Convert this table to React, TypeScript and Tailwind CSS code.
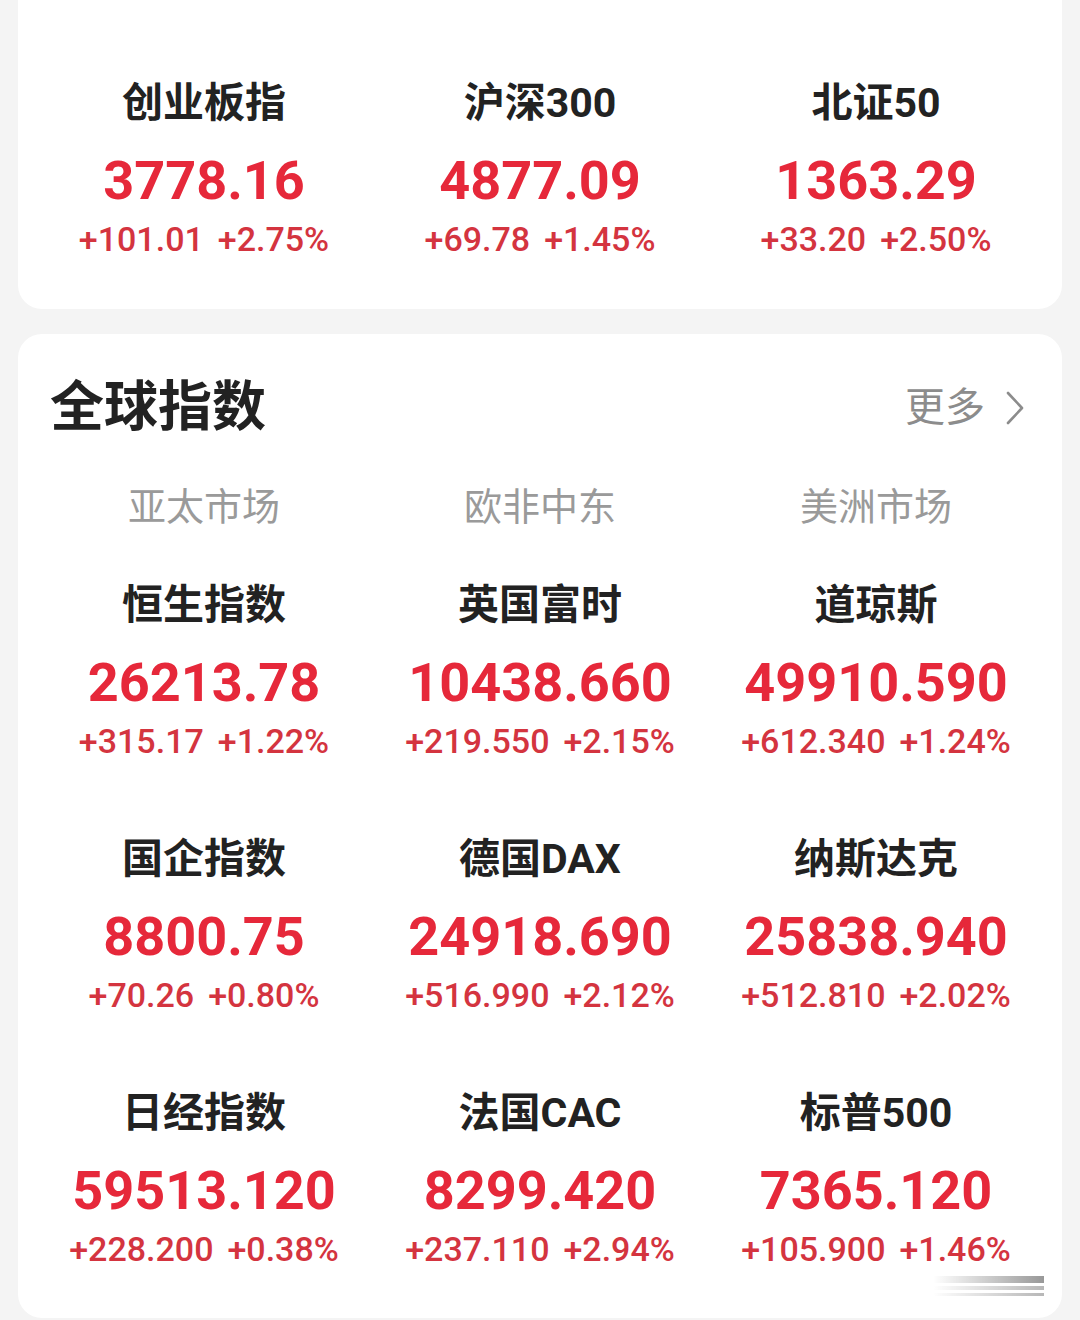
import React from "react";

type Quote = { name: string; value: string; diff: string; pct: string };

const topRow: Quote[] = [
  { name: "创业板指", value: "3778.16", diff: "+101.01", pct: "+2.75%" },
  { name: "沪深300", value: "4877.09", diff: "+69.78", pct: "+1.45%" },
  { name: "北证50", value: "1363.29", diff: "+33.20", pct: "+2.50%" },
];

const globalRows: Quote[][] = [
  [
    { name: "恒生指数", value: "26213.78", diff: "+315.17", pct: "+1.22%" },
    { name: "英国富时", value: "10438.660", diff: "+219.550", pct: "+2.15%" },
    { name: "道琼斯", value: "49910.590", diff: "+612.340", pct: "+1.24%" },
  ],
  [
    { name: "国企指数", value: "8800.75", diff: "+70.26", pct: "+0.80%" },
    { name: "德国DAX", value: "24918.690", diff: "+516.990", pct: "+2.12%" },
    { name: "纳斯达克", value: "25838.940", diff: "+512.810", pct: "+2.02%" },
  ],
  [
    { name: "日经指数", value: "59513.120", diff: "+228.200", pct: "+0.38%" },
    { name: "法国CAC", value: "8299.420", diff: "+237.110", pct: "+2.94%" },
    { name: "标普500", value: "7365.120", diff: "+105.900", pct: "+1.46%" },
  ],
];

const tabs = ["亚太市场", "欧非中东", "美洲市场"];

const font = { fontFamily: "Roboto, 'Noto Sans CJK SC', sans-serif" };

function QuoteCell({ q }: { q: Quote }) {
  return (
    <div className="flex flex-col items-center">
      <div className="text-[41px] leading-[52px] font-bold text-[#222222] whitespace-nowrap">{q.name}</div>
      <div className="mt-[22px] text-[54px] leading-[60px] font-bold text-[#e6283a] whitespace-nowrap">{q.value}</div>
      <div className="mt-[6px] flex gap-[14px] text-[34px] leading-[44px] font-medium text-[#d4343f] whitespace-nowrap">
        <span>{q.diff}</span>
        <span>{q.pct}</span>
      </div>
    </div>
  );
}

function Row({ items }: { items: Quote[] }) {
  return (
    <div className="grid grid-cols-3">
      {items.map((q) => (
        <QuoteCell key={q.name} q={q} />
      ))}
    </div>
  );
}

export default function App() {
  return (
    <div className="min-h-[1320px] bg-[#f4f4f4] px-[18px]" style={font}>
      <section className="rounded-b-[24px] bg-white px-[18px] pt-[77px] pb-[48px]">
        <Row items={topRow} />
      </section>

      <section className="relative mt-[25px] rounded-[24px] bg-white px-[18px] pt-[44px] pb-[47px]">
        <div className="flex items-center justify-between pl-[14px] pr-[19px]">
          <h2 className="text-[54px] leading-[60px] font-bold text-[#222222]">全球指数</h2>
          <div className="flex items-center gap-[20px] text-[40px] leading-[50px] text-[#8c8c8c]">
            <span>更多</span>
            <svg width="20" height="36" viewBox="0 0 20 36" fill="none" stroke="#8c8c8c" strokeWidth="2.6" strokeLinecap="round" strokeLinejoin="round">
              <path d="M3 3 L17 18 L3 33" />
            </svg>
          </div>
        </div>

        <div className="mt-[44px] grid grid-cols-3">
          {tabs.map((t) => (
            <div key={t} className="text-center text-[38px] leading-[50px] text-[#9a9a9a]">
              {t}
            </div>
          ))}
        </div>

        <div className="mt-[47px] flex flex-col gap-[70px]">
          {globalRows.map((r, i) => (
            <Row key={i} items={r} />
          ))}
        </div>

        <div className="absolute right-[18px] bottom-[22px] flex flex-col gap-[3px] opacity-60">
          <div className="h-[7px] w-[110px] bg-gradient-to-r from-transparent to-[#555]" />
          <div className="h-[4px] w-[110px] bg-gradient-to-r from-transparent to-[#888]" />
          <div className="h-[3px] w-[110px] bg-gradient-to-r from-transparent to-[#888]" />
        </div>
      </section>
    </div>
  );
}
